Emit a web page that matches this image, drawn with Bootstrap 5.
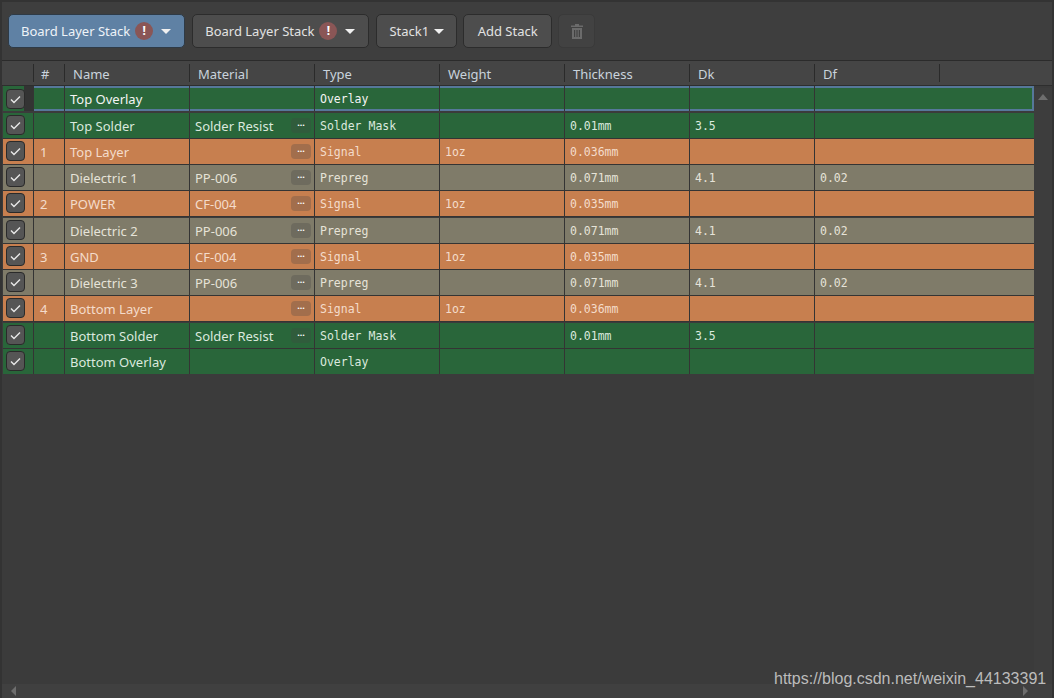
<!DOCTYPE html>
<html lang="en">
<head>
<meta charset="utf-8">
<title>Board Layer Stack</title>
<link href="https://cdn.jsdelivr.net/npm/bootstrap@5.3.0/dist/css/bootstrap.min.css" rel="stylesheet">
<style>
html,body{height:698px;overflow:hidden;background:#3b3b3b}
body{font-family:"Noto Sans","Open Sans",sans-serif;font-size:13px;color:#d8d8d8}
.app-frame{position:relative;width:1054px;height:698px;border-left:2px solid #333;border-top:2px solid #333;border-right:2px solid #333}
.tool-strip{height:59px;background:#3e3e3e;border-bottom:1px solid #2b2b2b;padding:12px 6px 0;gap:6px}
.tb-btn{height:34px;background:#4d4d4d;border:1px solid #2c2c2c;border-radius:5px;color:#e2e2e2;font-size:13px;line-height:1;padding:0 12px;gap:5px}
.tb-btn.is-on{background:#5f81a4;border-color:#2e3a46;color:#eef3f8}
.tb-btn.is-wide{padding-right:13px;margin-right:1px}
.tb-btn.is-add{padding:0 13.5px}
.tb-btn.is-off{background:#424242;border-color:#3a3a3a;width:37px;padding:0;justify-content:center}
.warn-dot{width:18px;height:18px;border-radius:50%;background:#8a5656;color:#fff;font-weight:700;font-size:12px;line-height:18px;text-align:center}
.tri{width:0;height:0;border-left:5px solid transparent;border-right:5px solid transparent;border-top:5px solid #f0f0f0;margin-left:3px}
.head-row{height:25px;background:#454545;border-bottom:1px solid #2e2e2e;padding-left:1px}
.hc{height:18px;margin-top:3px;border-right:1px solid #2a2a2a;padding-left:8px;line-height:20px;color:#c9d3dc;white-space:nowrap;flex:none}
.w-a{width:31px;padding:0}.w-b{width:31px}.w-c{width:125px}
.w-hash{padding-left:7px}
.layer-row{height:26px;margin-left:1px;width:1031px;border-bottom:1px solid #343434}
.gap-after{margin-bottom:1px}
.layer-row.is-green{background:#29663a;color:#dbe9de}
.layer-row.is-orange{background:#c77f4f;color:#f4dccb}
.layer-row.is-gray{background:#7f7b69;color:#e6e3d8}
.layer-row.is-sel{height:25px;outline:2px solid #56789a;outline-offset:-2px;margin-bottom:2px;color:#f4f4f4;border-bottom:0}
.layer-row.is-last{height:25px;border-bottom:0}
.dc{height:100%;border-right:1px solid #343434;padding-left:5px;line-height:27px;flex:none;white-space:nowrap;position:relative}
.dc.w-a{padding:2px 0 0 3px}
.is-sel .dc.w-a{padding-top:3px}
.dc.w-b{padding-left:6px}
.dc.w-c{width:125px}
.dc.w-last{width:218px;border-right:0}
.is-sel .dc.w-a{background:linear-gradient(90deg,#29663a 0,#29663a 21px,#333 21px)}
.mono{font-family:"DejaVu Sans Mono",monospace;font-size:11.5px}
.chk{width:19px;height:20px;border-radius:4px;background:#555;border:1px solid #2a2a2a}
.dots{position:absolute;right:3px;top:5px;width:20px;height:15px;border-radius:4px;background:rgba(70,70,70,.28);color:#fff;font-size:9px;line-height:13px;text-align:center;font-weight:700}
.scroll-v{position:absolute;right:0;top:86px;width:18px;height:596px;background:#3d3d3d}
.up-arrow{position:absolute;left:4px;top:6px;border-left:5px solid transparent;border-right:5px solid transparent;border-bottom:6px solid #6e6e6e}
.scroll-h{position:absolute;left:0;right:0;bottom:0;height:14px;background:#404040}
.arr-l{position:absolute;left:9px;top:2px;border-top:5px solid transparent;border-bottom:5px solid transparent;border-right:5px solid #6e6e6e}
.arr-r{position:absolute;right:24px;top:2px;border-top:5px solid transparent;border-bottom:5px solid transparent;border-left:5px solid #6e6e6e}
.water{position:absolute;left:772px;top:667px;font-family:"Liberation Sans",sans-serif;font-size:16px;line-height:20px;color:#bcbcbc;white-space:nowrap}
</style>
</head>
<body>
<div class="app-frame">
  <div class="tool-strip d-flex align-items-start">
    <button class="tb-btn is-on is-wide d-flex align-items-center" type="button">Board Layer Stack<span class="warn-dot">!</span><span class="tri"></span></button>
    <button class="tb-btn is-wide d-flex align-items-center" type="button">Board Layer Stack<span class="warn-dot">!</span><span class="tri"></span></button>
    <button class="tb-btn d-flex align-items-center" type="button">Stack1<span class="tri ms-0"></span></button>
    <button class="tb-btn is-add d-flex align-items-center" type="button">Add Stack</button>
    <button class="tb-btn is-off d-flex align-items-center" type="button" aria-label="Delete">
      <svg width="12" height="15" viewBox="0 0 12 15" fill="#6b6b6b"><path d="M4 0h4v1.5h4V3H0V1.5h4zM1 4h10v11H1zM3 6v7h1.2V6zm2.4 0v7h1.2V6zm2.4 0v7H9V6z" fill-rule="evenodd"/></svg>
    </button>
  </div>
  <div class="head-row d-flex">
    <div class="hc w-a"></div><div class="hc w-b w-hash">#</div><div class="hc w-c">Name</div><div class="hc w-c">Material</div><div class="hc w-c">Type</div><div class="hc w-c">Weight</div><div class="hc w-c">Thickness</div><div class="hc w-c">Dk</div><div class="hc w-c">Df</div>
  </div>
  <div>
    <div class="layer-row is-green is-sel d-flex"><div class="dc w-a"><span class="chk d-flex align-items-center justify-content-center"><svg width="11" height="9" viewBox="0 0 11 9"><path d="M1 4.5l3 3 6-6" fill="none" stroke="#e8e8e8" stroke-width="1.4"/></svg></span></div><div class="dc w-b"></div><div class="dc w-c">Top Overlay</div><div class="dc w-c"></div><div class="dc w-c mono">Overlay</div><div class="dc w-c"></div><div class="dc w-c"></div><div class="dc w-c"></div><div class="dc w-last"></div></div>
    <div class="layer-row is-green d-flex"><div class="dc w-a"><span class="chk d-flex align-items-center justify-content-center"><svg width="11" height="9" viewBox="0 0 11 9"><path d="M1 4.5l3 3 6-6" fill="none" stroke="#e8e8e8" stroke-width="1.4"/></svg></span></div><div class="dc w-b"></div><div class="dc w-c">Top Solder</div><div class="dc w-c">Solder Resist<span class="dots">···</span></div><div class="dc w-c mono">Solder Mask</div><div class="dc w-c"></div><div class="dc w-c mono">0.01mm</div><div class="dc w-c mono">3.5</div><div class="dc w-last"></div></div>
    <div class="layer-row is-orange d-flex"><div class="dc w-a"><span class="chk d-flex align-items-center justify-content-center"><svg width="11" height="9" viewBox="0 0 11 9"><path d="M1 4.5l3 3 6-6" fill="none" stroke="#e8e8e8" stroke-width="1.4"/></svg></span></div><div class="dc w-b">1</div><div class="dc w-c">Top Layer</div><div class="dc w-c"><span class="dots">···</span></div><div class="dc w-c mono">Signal</div><div class="dc w-c mono">1oz</div><div class="dc w-c mono">0.036mm</div><div class="dc w-c"></div><div class="dc w-last"></div></div>
    <div class="layer-row is-gray d-flex"><div class="dc w-a"><span class="chk d-flex align-items-center justify-content-center"><svg width="11" height="9" viewBox="0 0 11 9"><path d="M1 4.5l3 3 6-6" fill="none" stroke="#e8e8e8" stroke-width="1.4"/></svg></span></div><div class="dc w-b"></div><div class="dc w-c">Dielectric 1</div><div class="dc w-c">PP-006<span class="dots">···</span></div><div class="dc w-c mono">Prepreg</div><div class="dc w-c"></div><div class="dc w-c mono">0.071mm</div><div class="dc w-c mono">4.1</div><div class="dc w-last mono">0.02</div></div>
    <div class="layer-row is-orange gap-after d-flex"><div class="dc w-a"><span class="chk d-flex align-items-center justify-content-center"><svg width="11" height="9" viewBox="0 0 11 9"><path d="M1 4.5l3 3 6-6" fill="none" stroke="#e8e8e8" stroke-width="1.4"/></svg></span></div><div class="dc w-b">2</div><div class="dc w-c">POWER</div><div class="dc w-c">CF-004<span class="dots">···</span></div><div class="dc w-c mono">Signal</div><div class="dc w-c mono">1oz</div><div class="dc w-c mono">0.035mm</div><div class="dc w-c"></div><div class="dc w-last"></div></div>
    <div class="layer-row is-gray d-flex"><div class="dc w-a"><span class="chk d-flex align-items-center justify-content-center"><svg width="11" height="9" viewBox="0 0 11 9"><path d="M1 4.5l3 3 6-6" fill="none" stroke="#e8e8e8" stroke-width="1.4"/></svg></span></div><div class="dc w-b"></div><div class="dc w-c">Dielectric 2</div><div class="dc w-c">PP-006<span class="dots">···</span></div><div class="dc w-c mono">Prepreg</div><div class="dc w-c"></div><div class="dc w-c mono">0.071mm</div><div class="dc w-c mono">4.1</div><div class="dc w-last mono">0.02</div></div>
    <div class="layer-row is-orange d-flex"><div class="dc w-a"><span class="chk d-flex align-items-center justify-content-center"><svg width="11" height="9" viewBox="0 0 11 9"><path d="M1 4.5l3 3 6-6" fill="none" stroke="#e8e8e8" stroke-width="1.4"/></svg></span></div><div class="dc w-b">3</div><div class="dc w-c">GND</div><div class="dc w-c">CF-004<span class="dots">···</span></div><div class="dc w-c mono">Signal</div><div class="dc w-c mono">1oz</div><div class="dc w-c mono">0.035mm</div><div class="dc w-c"></div><div class="dc w-last"></div></div>
    <div class="layer-row is-gray d-flex"><div class="dc w-a"><span class="chk d-flex align-items-center justify-content-center"><svg width="11" height="9" viewBox="0 0 11 9"><path d="M1 4.5l3 3 6-6" fill="none" stroke="#e8e8e8" stroke-width="1.4"/></svg></span></div><div class="dc w-b"></div><div class="dc w-c">Dielectric 3</div><div class="dc w-c">PP-006<span class="dots">···</span></div><div class="dc w-c mono">Prepreg</div><div class="dc w-c"></div><div class="dc w-c mono">0.071mm</div><div class="dc w-c mono">4.1</div><div class="dc w-last mono">0.02</div></div>
    <div class="layer-row is-orange gap-after d-flex"><div class="dc w-a"><span class="chk d-flex align-items-center justify-content-center"><svg width="11" height="9" viewBox="0 0 11 9"><path d="M1 4.5l3 3 6-6" fill="none" stroke="#e8e8e8" stroke-width="1.4"/></svg></span></div><div class="dc w-b">4</div><div class="dc w-c">Bottom Layer</div><div class="dc w-c"><span class="dots">···</span></div><div class="dc w-c mono">Signal</div><div class="dc w-c mono">1oz</div><div class="dc w-c mono">0.036mm</div><div class="dc w-c"></div><div class="dc w-last"></div></div>
    <div class="layer-row is-green d-flex"><div class="dc w-a"><span class="chk d-flex align-items-center justify-content-center"><svg width="11" height="9" viewBox="0 0 11 9"><path d="M1 4.5l3 3 6-6" fill="none" stroke="#e8e8e8" stroke-width="1.4"/></svg></span></div><div class="dc w-b"></div><div class="dc w-c">Bottom Solder</div><div class="dc w-c">Solder Resist<span class="dots">···</span></div><div class="dc w-c mono">Solder Mask</div><div class="dc w-c"></div><div class="dc w-c mono">0.01mm</div><div class="dc w-c mono">3.5</div><div class="dc w-last"></div></div>
    <div class="layer-row is-green is-last d-flex"><div class="dc w-a"><span class="chk d-flex align-items-center justify-content-center"><svg width="11" height="9" viewBox="0 0 11 9"><path d="M1 4.5l3 3 6-6" fill="none" stroke="#e8e8e8" stroke-width="1.4"/></svg></span></div><div class="dc w-b"></div><div class="dc w-c">Bottom Overlay</div><div class="dc w-c"></div><div class="dc w-c mono">Overlay</div><div class="dc w-c"></div><div class="dc w-c"></div><div class="dc w-c"></div><div class="dc w-last"></div></div>
  </div>
  <div class="scroll-v"><span class="up-arrow"></span></div>
  <div class="scroll-h"><span class="arr-l"></span><span class="arr-r"></span></div>
  <div class="water">https://blog.csdn.net/weixin_44133391</div>
</div>
<script src="https://cdn.jsdelivr.net/npm/bootstrap@5.3.0/dist/js/bootstrap.bundle.min.js"></script>
</body>
</html>
